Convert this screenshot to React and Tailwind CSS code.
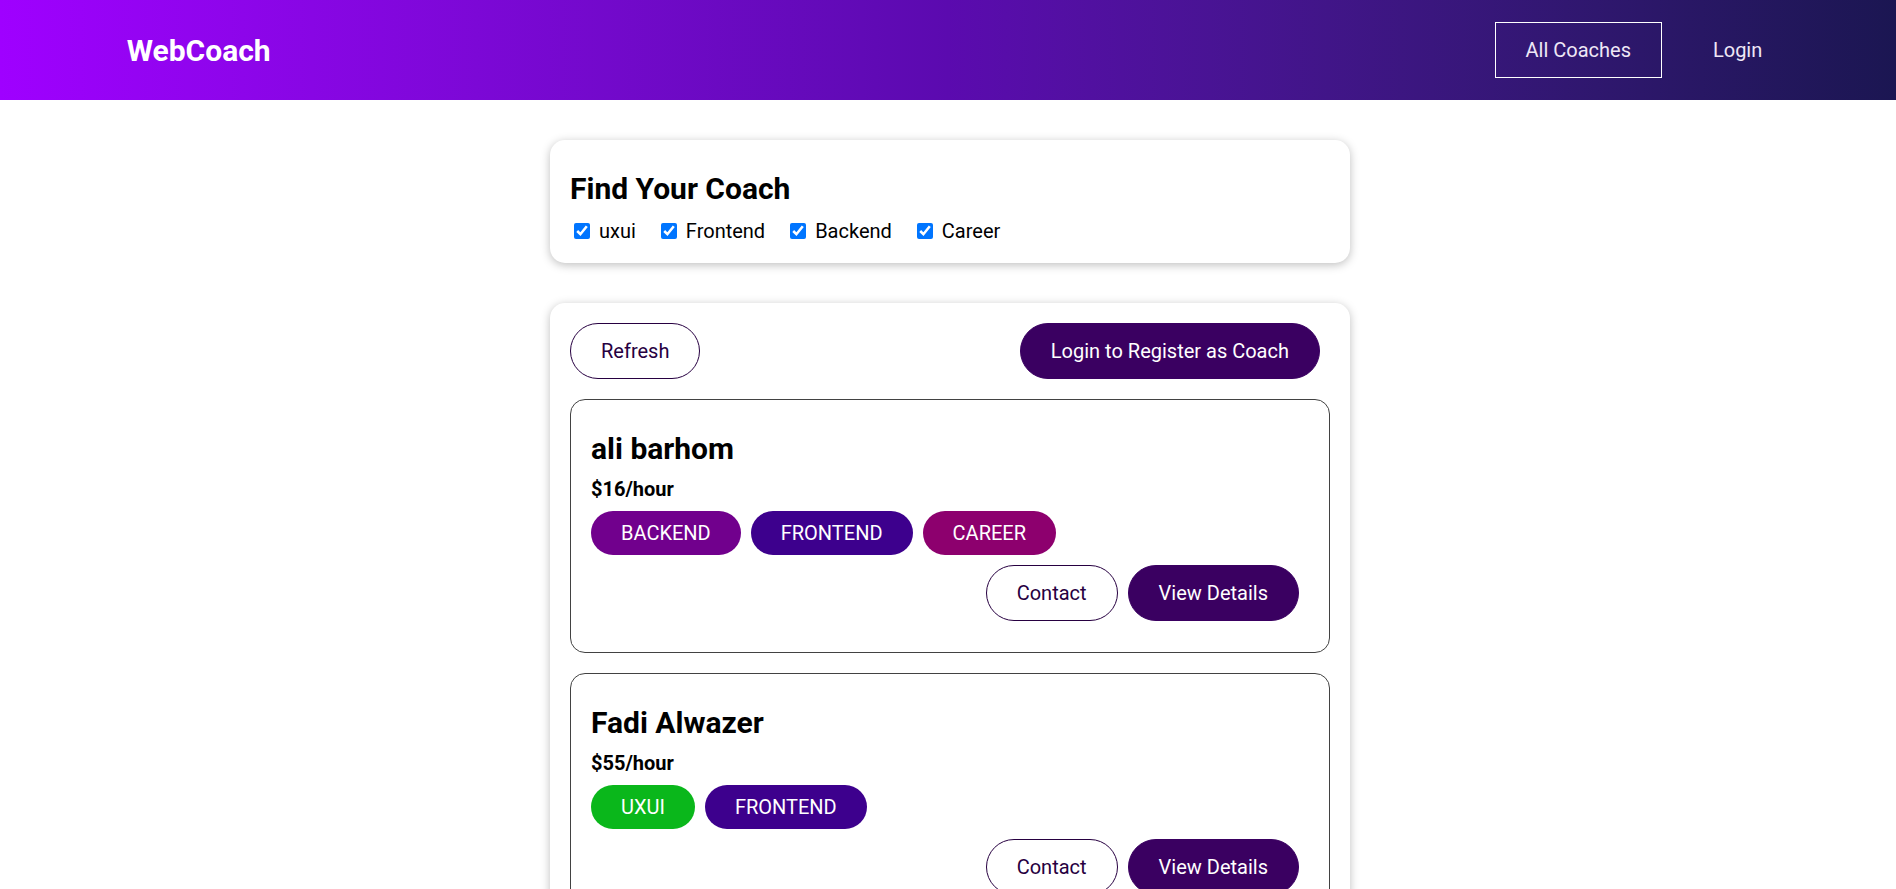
import React from 'react';

const coaches = [
    { id: 'c1', name: 'ali barhom', rate: 16, areas: ['backend', 'frontend', 'career'] },
    { id: 'c2', name: 'Fadi Alwazer', rate: 55, areas: ['uxui', 'frontend'] },
];

const badgeColors = {
    backend: 'bg-[#71008d]',
    frontend: 'bg-[#3d008d]',
    career: 'bg-[#8d006e]',
    uxui: 'bg-[#0ab71b]',
};

function Header() {
    return (
        <header className="w-full h-[100px] pl-[4px] flex items-center bg-gradient-to-r from-[#9f00ff] via-[#5b0aaf] to-[#1b1652]">
            <nav className="w-[90.2%] mx-auto flex justify-between items-center">
                <h1 className="m-0">
                    <a href="#" className="inline-block px-[30px] py-[15px] text-[30px] font-bold text-white">WebCoach</a>
                </h1>
                <ul className="flex m-0 p-0 list-none">
                    <li className="mx-[10px]">
                        <a href="#" className="inline-block px-[30px] py-[15px] text-[20px] text-[#efe7f6] border border-white">All Coaches</a>
                    </li>
                    <li className="mx-[10px]">
                        <a href="#" className="inline-block px-[30px] py-[15px] text-[20px] text-[#efe7f6] border border-transparent">Login</a>
                    </li>
                </ul>
            </nav>
        </header>
    );
}

function Filter() {
    const options = [
        { id: 'uxui', label: 'uxui' },
        { id: 'frontend', label: 'Frontend' },
        { id: 'backend', label: 'Backend' },
        { id: 'career', label: 'Career' },
    ];
    return (
        <section className="max-w-[800px] mx-auto mt-[40px] mb-[40px] rounded-[15px] p-[20px] bg-white shadow-[0_2px_10px_rgba(0,0,0,0.26)]">
            <h2 className="mt-[11px] mb-[10px] text-[30px] font-bold">Find Your Coach</h2>
            <div className="flex items-center pt-[4px] pb-[1px] leading-[22px] text-[20px]">
                {options.map((o) => (
                    <span key={o.id} className="flex items-center mr-[21px]">
                        <input type="checkbox" id={o.id} defaultChecked className="w-4 h-4 mx-[4px] accent-[#0075ff]" />
                        <label htmlFor={o.id} className="ml-[5px]">{o.label}</label>
                    </span>
                ))}
            </div>
        </section>
    );
}

function CoachItem({ coach }) {
    return (
        <li className="my-[20px] border border-[#424242] rounded-[15px] p-[20px]">
            <h3 className="my-[10px] text-[30px] leading-[37px] font-bold">{coach.name}</h3>
            <h4 className="my-[10px] text-[20px] font-bold">${coach.rate}/hour</h4>
            <div className="my-[10px] flex gap-[10px]">
                {coach.areas.map((a) => (
                    <span key={a} className={`inline-block rounded-[37px] px-[30px] py-[10px] text-white uppercase ${badgeColors[a]}`}>{a}</span>
                ))}
            </div>
            <div className="mt-[10px] mb-[11px] flex justify-end">
                <a href="#" className="inline-block mr-[10px] px-[30px] py-[15px] rounded-[37px] border border-[#270041] text-[#270041]">Contact</a>
                <a href="#" className="inline-block mr-[10px] px-[30px] py-[15px] rounded-[37px] border border-[#3a0061] bg-[#3a0061] text-white">View Details</a>
            </div>
        </li>
    );
}

export default function App() {
    return (
        <div className="min-h-screen bg-white text-black text-[20px] leading-[normal]" style={{ fontFamily: 'Roboto, "Liberation Sans", sans-serif' }}>
            <Header />
            <main className="pl-[4px]">
                <Filter />
                <section className="max-w-[800px] mx-auto mb-[40px] rounded-[15px] p-[20px] bg-white shadow-[0_2px_10px_rgba(0,0,0,0.26)]">
                    <div className="flex justify-between">
                        <button className="mr-[10px] px-[30px] py-[15px] rounded-[37px] border border-[#270041] text-[#270041] bg-transparent">Refresh</button>
                        <a href="#" className="inline-block mr-[10px] px-[30px] py-[15px] rounded-[37px] border border-[#3a0061] bg-[#3a0061] text-white">Login to Register as Coach</a>
                    </div>
                    <ul className="m-0 p-0 list-none">
                        {coaches.map((c) => (
                            <CoachItem key={c.id} coach={c} />
                        ))}
                    </ul>
                </section>
            </main>
        </div>
    );
}
